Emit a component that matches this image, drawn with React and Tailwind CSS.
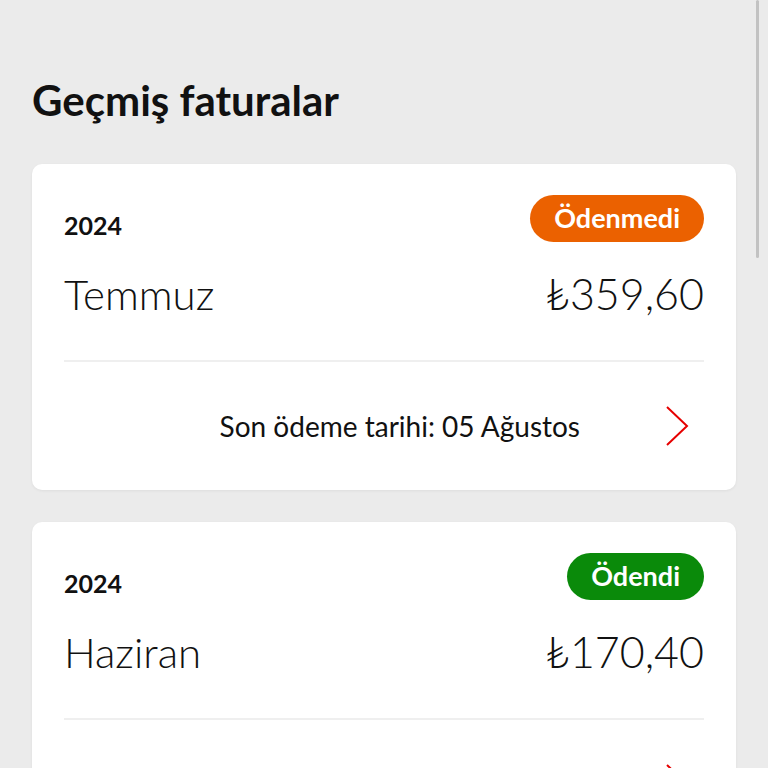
const bills = [
  { year: "2024", month: "Temmuz", amount: "359,60", status: "Ödenmedi", paid: false, due: "Son ödeme tarihi: 05 Ağustos" },
  { year: "2024", month: "Haziran", amount: "170,40", status: "Ödendi", paid: true, due: "Son ödeme tarihi: 05 Temmuz" },
];

function Chevron() {
  return (
    <svg width="26" height="42" viewBox="0 0 26 42" fill="none" className="shrink-0">
      <polyline points="3,2 23,21 3,40" stroke="#e60000" strokeWidth="2" strokeLinejoin="miter" />
    </svg>
  );
}

function BillCard({ bill }) {
  return (
    <div className="bg-white rounded-[10px] shadow-[0_1px_3px_rgba(0,0,0,0.06)] shrink-0">
      <div className="px-8 pt-[31px]">
        <div className="flex items-start justify-between">
          <span className="mt-[15px] text-[25px] leading-[30px] font-bold text-[#111]">{bill.year}</span>
          <span
            className={
              "h-[47px] px-6 rounded-full flex items-center text-white text-[27px] font-bold " +
              (bill.paid ? "bg-[#0a8a0a]" : "bg-[#eb6100]")
            }
          >
            {bill.status}
          </span>
        </div>
        <div className="flex items-center justify-between mt-[27px] pb-[41px] border-b-2 border-[#efefef]">
          <span className="text-[42px] leading-[50px] font-light text-[#111]">{bill.month}</span>
          <span className="text-[43px] leading-[50px] font-light text-[#111]">₺{bill.amount}</span>
        </div>
      </div>
      <div className="h-[128px] flex items-center justify-end pl-8 pr-[46px]">
        <span className="text-[28px] text-[#111] mr-[84px] whitespace-nowrap">{bill.due}</span>
        <Chevron />
      </div>
    </div>
  );
}

export default function App() {
  return (
    <div
      className="relative h-[768px] overflow-hidden bg-[#ebebeb]"
      style={{ fontFamily: "Lato, 'Open Sans', sans-serif" }}
    >
      <div className="px-8 pt-[74px] flex flex-col gap-8">
        <h1 className="text-[42px] leading-[52px] font-bold text-[#111] mb-[6px]">Geçmiş faturalar</h1>
        {bills.map((b) => (
          <BillCard key={b.month} bill={b} />
        ))}
      </div>
      <div className="absolute right-[9px] top-0 w-[3px] h-[258px] bg-[#c2c2c2] rounded-full" />
    </div>
  );
}
